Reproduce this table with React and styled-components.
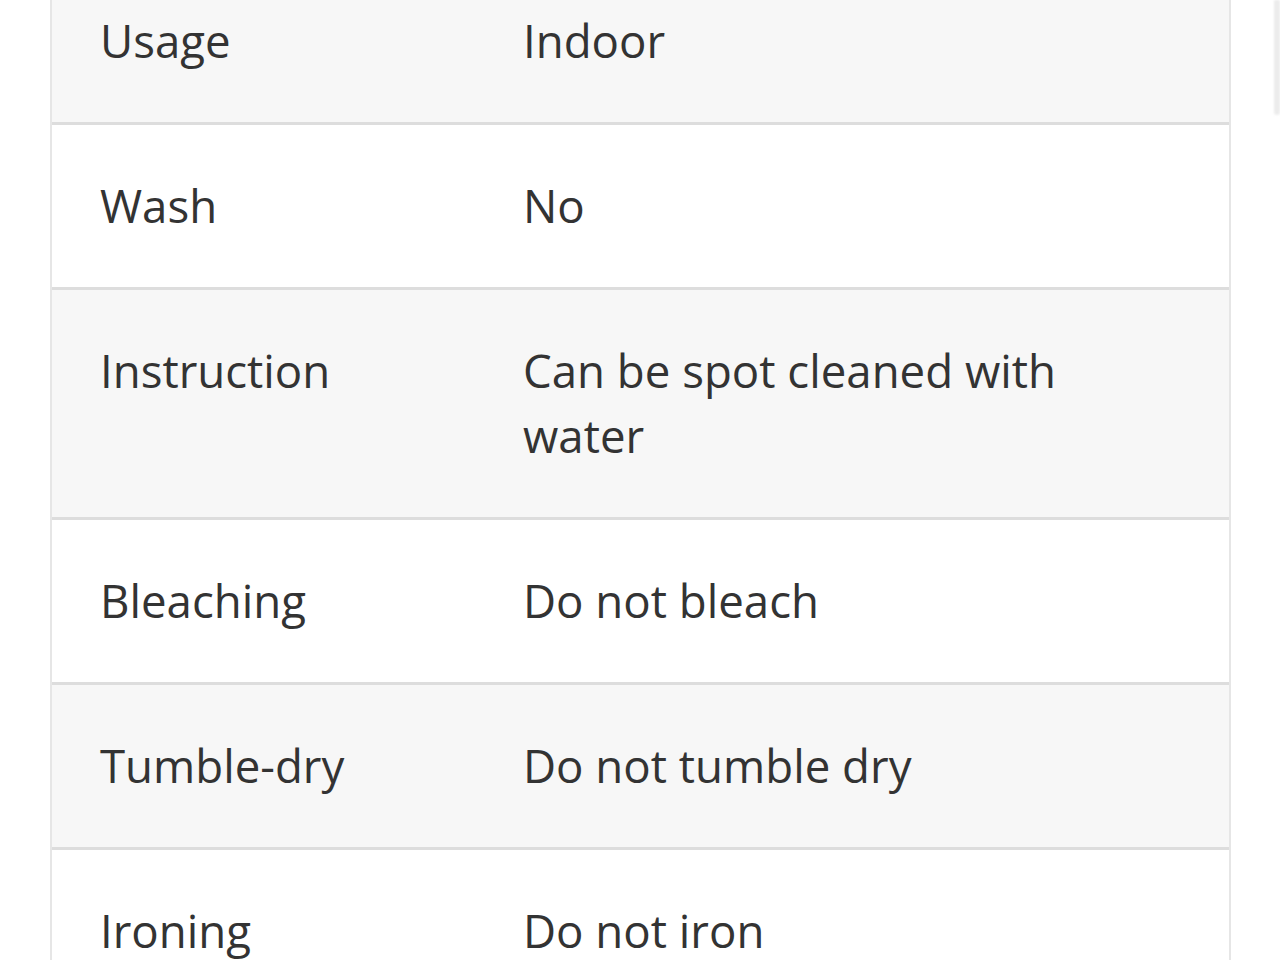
import React from "react";
import styled, { createGlobalStyle } from "styled-components";

const GlobalStyle = createGlobalStyle`
  html, body {
    margin: 0;
    padding: 0;
    background: #ffffff;
    overflow: hidden;
  }
  body {
    font-family: "Open Sans", "Noto Sans", sans-serif;
    color: #333333;
  }
`;

const Page = styled.div`
  width: 1280px;
  height: 960px;
  overflow: hidden;
  position: relative;
  background: #ffffff;
`;

const Table = styled.div`
  margin: -40px 49px 0 50px;
  border-left: 2px solid #e6e6e6;
  border-right: 2px solid #e6e6e6;
`;

const Row = styled.div`
  display: grid;
  grid-template-columns: 423px 1fr;
  background: ${(p) => (p.$shaded ? "#f7f7f7" : "#ffffff")};
  border-bottom: 3px solid #dddddd;
`;

const Cell = styled.div`
  padding: 48px 48px 49px 48px;
  font-size: 45.6px;
  line-height: 65px;
  color: #333333;
`;

const ScrollThumb = styled.div`
  position: fixed;
  top: 0;
  right: 0;
  width: 6px;
  height: 115px;
  border-radius: 0 0 3px 3px;
  background: #ececec;
  filter: blur(1px);
`;

const specs = [
  ["Usage", "Indoor"],
  ["Wash", "No"],
  ["Instruction", "Can be spot cleaned with water"],
  ["Bleaching", "Do not bleach"],
  ["Tumble-dry", "Do not tumble dry"],
  ["Ironing", "Do not iron"],
];

const App = () => {
  return (
    <Page>
      <GlobalStyle />
      <Table>
        {specs.map(([label, value], i) => (
          <Row key={label} $shaded={i % 2 === 0}>
            <Cell>{label}</Cell>
            <Cell>{value}</Cell>
          </Row>
        ))}
      </Table>
      <ScrollThumb />
    </Page>
  );
};

export default App;
